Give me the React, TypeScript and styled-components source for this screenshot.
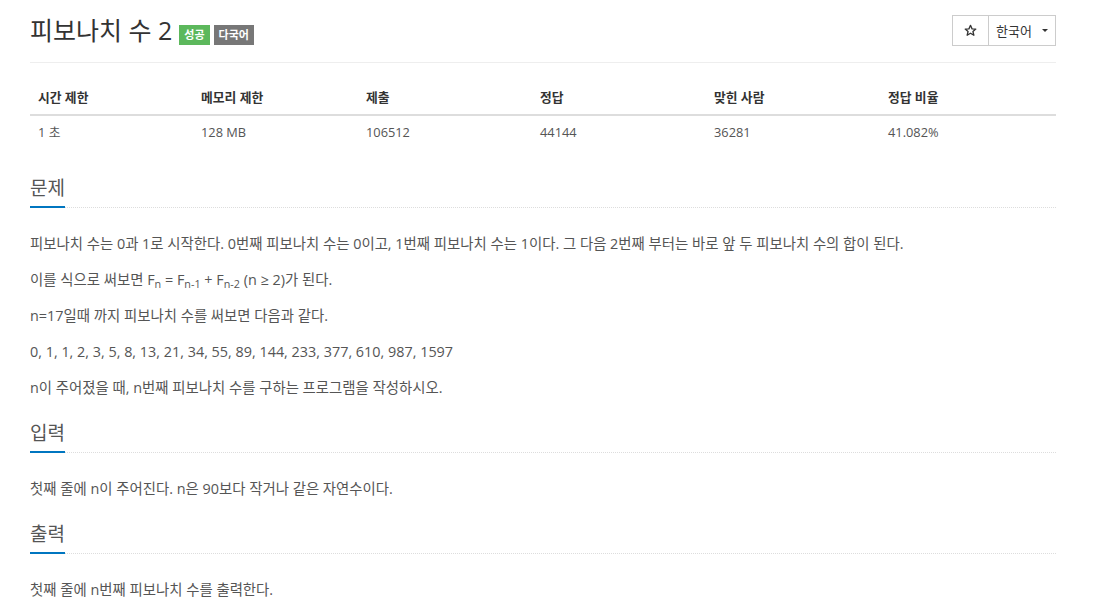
import React from "react";
import styled, { createGlobalStyle } from "styled-components";

const Global = createGlobalStyle`
  html, body { margin: 0; padding: 0; background: #fff; }
  body {
    font-family: "Open Sans", "Noto Sans CJK KR", sans-serif;
    font-size: 14px;
    color: #555;
    overflow: hidden;
  }
  * { box-sizing: border-box; }
`;

const Page = styled.div`
  width: 1026px;
  margin-left: 30px;
`;

const Header = styled.div`
  display: flex;
  align-items: center;
  justify-content: space-between;
  padding-top: 12px;
  padding-bottom: 14px;
  border-bottom: 1px solid #eee;
`;

const TitleWrap = styled.div`
  display: flex;
  align-items: center;
  gap: 4px;
`;

const Title = styled.h1`
  margin: 0 3px 0 0;
  font-size: 25px;
  line-height: 36px;
  font-weight: 400;
  color: #333;
`;

const Badge = styled.span<{ $bg: string }>`
  display: inline-block;
  background: ${(p) => p.$bg};
  color: #fff;
  font-size: 11px;
  font-weight: 700;
  line-height: 20px;
  height: 20px;
  padding: 0 5px;
  margin-top: 9px;
`;

const BtnGroup = styled.div`
  display: flex;
`;

const Btn = styled.button<{ $w: number }>`
  display: flex;
  align-items: center;
  justify-content: center;
  gap: 10px;
  width: ${(p) => p.$w}px;
  height: 31px;
  border: 1px solid #ccc;
  background: #fff;
  color: #333;
  font-family: "Open Sans", "Noto Sans CJK KR", sans-serif;
  font-size: 13px;
  padding: 0;
  & + & { margin-left: -1px; }
`;

const Caret = styled.span`
  width: 0;
  height: 0;
  border-left: 3px solid transparent;
  border-right: 3px solid transparent;
  border-top: 3px solid #333;
  margin-top: 1px;
`;

const Table = styled.table`
  width: 100%;
  border-collapse: collapse;
  margin-top: 18px;
  font-size: 12.8px;
  line-height: 17px;
  table-layout: fixed;
`;

const Th = styled.th<{ $w: number }>`
  width: ${(p) => p.$w}px;
  text-align: left;
  padding: 8px;
  font-weight: 700;
  color: #333;
  border-bottom: 2px solid #ddd;
`;

const Td = styled.td`
  padding: 8px;
  color: #555;
`;

const Section = styled.section`
  margin-top: 26px;
  & + & { margin-top: 19px; }
`;

const HeadingRow = styled.div`
  border-bottom: 1px dotted #ddd;
  margin-bottom: 23px;
`;

const Heading = styled.h2`
  display: inline-block;
  margin: 0 0 -1px;
  font-size: 19px;
  line-height: 26px;
  font-weight: 400;
  color: #555;
  padding-bottom: 5px;
  border-bottom: 2px solid #0076c0;
`;

const P = styled.p`
  margin: 0 0 10px;
  font-size: 14.4px;
  line-height: 26px;
  color: #555;
`;

const Sub = styled.sub`
  font-size: 75%;
  line-height: 0;
  vertical-align: baseline;
  position: relative;
  bottom: -0.25em;
`;

const StarIcon = () => (
  <svg width="13" height="13" viewBox="0 0 24 24" fill="none" stroke="#333" strokeWidth="2.4" strokeLinejoin="round">
    <polygon points="12,2.5 14.9,9 21.8,9.4 16.5,13.9 18.2,20.8 12,17 5.8,20.8 7.5,13.9 2.2,9.4 9.1,9" />
  </svg>
);

const heads = ["시간 제한", "메모리 제한", "제출", "정답", "맞힌 사람", "정답 비율"];
const widths = [163, 165, 174, 174, 174, 176];
const vals = ["1 초", "128 MB", "106512", "44144", "36281", "41.082%"];

export default function App() {
  return (
    <>
      <Global />
      <Page>
        <Header>
          <TitleWrap>
            <Title>피보나치 수 2</Title>
            <Badge $bg="#5cb85c">성공</Badge>
            <Badge $bg="#777">다국어</Badge>
          </TitleWrap>
          <BtnGroup>
            <Btn $w={37}><StarIcon /></Btn>
            <Btn $w={68}>한국어<Caret /></Btn>
          </BtnGroup>
        </Header>
        <Table>
          <thead>
            <tr>{heads.map((h, i) => <Th key={h} $w={widths[i]}>{h}</Th>)}</tr>
          </thead>
          <tbody>
            <tr>{vals.map((v) => <Td key={v}>{v}</Td>)}</tr>
          </tbody>
        </Table>
        <Section>
          <HeadingRow><Heading>문제</Heading></HeadingRow>
          <P>피보나치 수는 0과 1로 시작한다. 0번째 피보나치 수는 0이고, 1번째 피보나치 수는 1이다. 그 다음 2번째 부터는 바로 앞 두 피보나치 수의 합이 된다.</P>
          <P>이를 식으로 써보면 F<Sub>n</Sub> = F<Sub>n-1</Sub> + F<Sub>n-2</Sub> (n ≥ 2)가 된다.</P>
          <P>n=17일때 까지 피보나치 수를 써보면 다음과 같다.</P>
          <P>0, 1, 1, 2, 3, 5, 8, 13, 21, 34, 55, 89, 144, 233, 377, 610, 987, 1597</P>
          <P>n이 주어졌을 때, n번째 피보나치 수를 구하는 프로그램을 작성하시오.</P>
        </Section>
        <Section>
          <HeadingRow><Heading>입력</Heading></HeadingRow>
          <P>첫째 줄에 n이 주어진다. n은 90보다 작거나 같은 자연수이다.</P>
        </Section>
        <Section>
          <HeadingRow><Heading>출력</Heading></HeadingRow>
          <P>첫째 줄에 n번째 피보나치 수를 출력한다.</P>
        </Section>
      </Page>
    </>
  );
}
